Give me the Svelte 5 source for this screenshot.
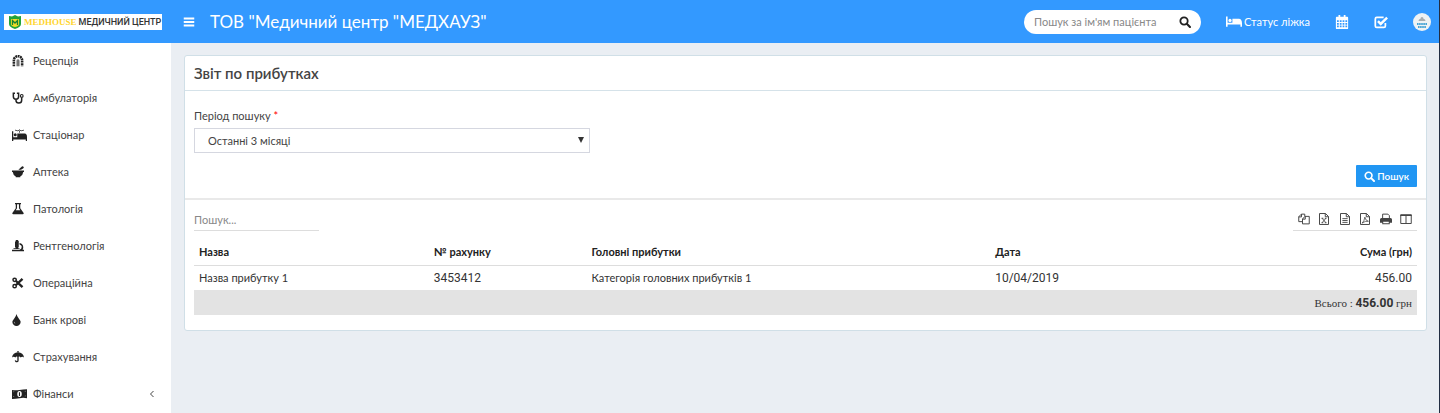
<script lang="ts">
	interface MenuItem {
		label: string;
		icon: string;
		expandable?: boolean;
	}

	interface IncomeRow {
		name: string;
		invoice: string;
		head: string;
		date: string;
		amount: number;
	}

	const menu: MenuItem[] = [
		{ label: 'Рецепція', icon: 'reception' },
		{ label: 'Амбулаторія', icon: 'stethoscope' },
		{ label: 'Стаціонар', icon: 'ward' },
		{ label: 'Аптека', icon: 'mortar' },
		{ label: 'Патологія', icon: 'flask' },
		{ label: 'Рентгенологія', icon: 'microscope' },
		{ label: 'Операційна', icon: 'scissors' },
		{ label: 'Банк крові', icon: 'drop' },
		{ label: 'Страхування', icon: 'umbrella' },
		{ label: 'Фінанси', icon: 'money', expandable: true }
	];

	const exports = [
		{ label: 'Копіювати', icon: 'copy' },
		{ label: 'Excel', icon: 'excel' },
		{ label: 'CSV', icon: 'text' },
		{ label: 'PDF', icon: 'pdf' },
		{ label: 'Друк', icon: 'print' },
		{ label: 'Колонки', icon: 'columns' }
	];

	const rows: IncomeRow[] = [
		{ name: 'Назва прибутку 1', invoice: '3453412', head: 'Категорія головних прибутків 1', date: '10/04/2019', amount: 456 }
	];

	const wideIcons = ['ward', 'money', 'bed'];

	let patient = $state('');
	let period = $state('3m');
	let filter = $state('');

	let visibleRows = $derived(
		rows.filter(r => r.name.toLowerCase().includes(filter.toLowerCase()))
	);
	let total = $derived(visibleRows.reduce((sum, r) => sum + r.amount, 0));
</script>

{#snippet icon(name: string)}
	<svg class="icon" class:wide={wideIcons.includes(name)} viewBox={wideIcons.includes(name) ? '0 0 20 16' : '0 0 16 16'} aria-hidden="true">
		{#if name === 'reception'}
			<path d="M2.500 15V7a5.500 5.500 0 0 1 11 0v8" fill="none" stroke="currentColor" stroke-width="3.400" stroke-dasharray="2.400 .8" />
			<path d="M5.500 15V8a2.500 2.500 0 0 1 5 0v7z" opacity=".4" />
			<path d="M8 6v9" stroke="currentColor" />
		{:else if name === 'stethoscope'}
			<path d="M4 1.500H1.800V6a3.500 3.500 0 0 0 7 0V1.500H6.500M5.300 9.500V11a3.800 3.800 0 0 0 7.600 0V7" fill="none" stroke="currentColor" stroke-width="2" />
			<circle cx="13" cy="5.200" r="1.800" fill="none" stroke="currentColor" stroke-width="1.500" />
		{:else if name === 'ward'}
			<path d="M0 3h1.700v8H20v5h-1.600v-2H1.700v2H0zM7 6h10q3 0 3 5H7z" />
			<circle cx="4.300" cy="7.500" r="2" />
			<path d="M4 1.500l4 1 2-1.500 2 1.500 4-1M10 2v3" fill="none" stroke="currentColor" />
		{:else if name === 'mortar'}
			<path d="M0 6h16v2h-1q-.4 4-4 6v1H5v-1Q1.400 12 1 8H0zM8.500 5l4.700-4.500q1.600-.5 2.300.8t-.8 2L12 5z" />
		{:else if name === 'flask'}
			<path fill-rule="evenodd" d="M4 0h8v1.800h-1V7l4.300 6q1 2-1 2H1.700q-2 0-1-2L5 7V1.800H4zM6.700 1.800V7L5 9.500h6L9.300 7V1.800z" />
		{:else if name === 'microscope'}
			<path d="M5 0h3v1h1v9H8v1H5v-1H4V2h1zM10 4q5 1 5 6 0 2-1 3h2v2H0v-2h10q3-1 3-4 0-2-3-3zM2 11h8v1H2z" />
		{:else if name === 'scissors'}
			<path d="M5 5l9 8.500M5 11l9-8.500" stroke="currentColor" stroke-width="3.200" />
			<circle cx="3.500" cy="3.800" r="2.200" fill="none" stroke="currentColor" stroke-width="2" />
			<circle cx="3.500" cy="12.200" r="2.200" fill="none" stroke="currentColor" stroke-width="2" />
		{:else if name === 'drop'}
			<path fill-rule="evenodd" d="M6 0q.5 2.500 2.800 5.500Q11.500 9 11.500 10.500a5.500 5.500 0 0 1-11 0Q.5 9 3.200 5.500 5.500 2.500 6 0zM3 10q-.8 2 1.500 3.300Q3.700 11.500 3 10z" />
		{:else if name === 'umbrella'}
			<path d="M8 0v2M8 7v5.500q0 1.700-1.700 1.700T4.700 12.500" fill="none" stroke="currentColor" stroke-width="1.800" />
			<path d="M0 8.500Q1 2 8 1.500q7 .5 8 7-2.400-2-4.500 0Q10 6.500 8 8 6 6.500 4.500 8.500 2.400 6.500 0 8.500z" />
		{:else if name === 'money'}
			<path fill-rule="evenodd" d="M0 2.500q5 1 10 0t10-1v12q-5-1-10 0t-10 1zM2 4.800v1q1 0 1-1zm16-1q-1 0-1 1h1zM2 11v1h1q0-1-1-1zm16-1q-1 0-1 1h1zM10 4q-3 0-3 4t3 4 3-4-3-4zm-.8 1.500h1.500v5h-1.500z" />
		{:else if name === 'bed'}
			<path d="M0 1h2v8h18v5h-2v-3H2v3H0zM8 4h8q4 0 4 6H8z" />
			<circle cx="5" cy="6" r="2" />
		{:else if name === 'bars'}
			<path d="M1 2h14v2.600H1zM1 6.700h14v2.600H1zM1 11.400h14V14H1z" />
		{:else if name === 'search'}
			<circle cx="6.700" cy="6.700" r="4.900" fill="none" stroke="currentColor" stroke-width="2.400" />
			<path d="M10.400 10.400l4.200 4.200" stroke="currentColor" stroke-width="2.800" stroke-linecap="round" />
		{:else if name === 'calendar'}
			<path fill-rule="evenodd" d="M1 3q0-1 1-1h2V0h2v2h4V0h2v2h2q1 0 1 1v12q0 1-1 1H2q-1 0-1-1zM2.300 6v2h2V6zm3.200 0v2h2V6zm3.200 0v2h2V6zm3.200 0v2h2V6zM2.300 9v2h2V9zm3.200 0v2h2V9zm3.200 0v2h2V9zm3.200 0v2h2V9zM2.300 12v2h2v-2zm3.200 0v2h2v-2zm3.200 0v2h2v-2zm3.200 0v2h2v-2z" />
		{:else if name === 'check'}
			<path d="M13 9v3.500q0 1.700-1.700 1.700H3.200q-1.700 0-1.700-1.700v-8q0-1.700 1.700-1.700H11" fill="none" stroke="currentColor" stroke-width="2" />
			<path d="M4.500 7l3.200 3.200L15 3" fill="none" stroke="currentColor" stroke-width="2.800" />
		{:else if name === 'copy'}
			<path d="M6 11.500H1V5l3.500-3.500H9v3M1 5.200h3.700V1.500M6 8l3.300-3.500H15v10H6zM6 8.200h3.700V4.500" fill="none" stroke="currentColor" stroke-width="1.300" />
		{:else if name === 'print'}
			<path d="M3.500 7V1.500h7L12.500 3.500V7" fill="none" stroke="currentColor" stroke-width="1.300" />
			<path fill-rule="evenodd" d="M2 6.500h12q2 0 2 2V13h-3v2H3v-2H0V8.500q0-2 2-2zm2.300 5v2.200h7.400v-2.200z" />
		{:else if name === 'columns'}
			<path d="M1 2.500h14v11.500H1zM8 3v11" fill="none" stroke="currentColor" stroke-width="1.300" />
			<path d="M.5 2h15v2H.5z" />
		{:else}
			<path d="M2 .7h8l4 4v10.600H2zM9.700.7V5H14" fill="none" stroke="currentColor" stroke-width="1.300" />
			{#if name === 'excel'}
				<path d="M5.500 7l5 6M10.500 7l-5 6M4.700 7h2.500M9 7h2.300M4.700 13H7M9 13h2.300" fill="none" stroke="currentColor" stroke-width="1.200" />
			{:else if name === 'text'}
				<path d="M4.500 7.500h7M4.500 10h7M4.500 12.500h7" stroke="currentColor" stroke-width="1.200" />
			{:else}
				<path d="M4 13.500q3-2 3.800-8 1 5 4.700 5.500-4-.7-8.500 2.500z" fill="none" stroke="currentColor" />
			{/if}
		{/if}
	</svg>
{/snippet}

<div class="shell">
	<header class="topbar">
		<a class="brand" href="#home">
			<svg class="shield" viewBox="0 0 14 14" aria-hidden="true">
				<path d="M1 1l3 .6L7 0l3 1.600L13 1v8q0 3-6 5-6-2-6-5z" fill="#23a339" />
				<path d="M3 4h8v6q-2 2-4 2t-4-2z" fill="#f5dc27" />
				<path d="M4.500 10V5.500L7 8l2.500-2.500V10" fill="none" stroke="#168334" stroke-width="1.300" />
			</svg>
			<span class="brand-name">MEDHOUSE</span>
			<span class="brand-kind">МЕДИЧНИЙ ЦЕНТР</span>
		</a>
		<button class="toggle" aria-label="Меню">{@render icon('bars')}</button>
		<span class="title">ТОВ "Медичний центр "МЕДХАУЗ"</span>
		<form class="patient-search" role="search" onsubmit={e => e.preventDefault()}>
			<input type="text" placeholder="Пошук за ім'ям пацієнта" aria-label="Пошук за ім'ям пацієнта" bind:value={patient} />
			<button aria-label="Знайти">{@render icon('search')}</button>
		</form>
		<nav class="tools">
			<a class="bed-status" href="#beds">{@render icon('bed')}Статус ліжка</a>
			<a href="#calendar" aria-label="Календар">{@render icon('calendar')}</a>
			<a href="#tasks" aria-label="Завдання">{@render icon('check')}</a>
			<a class="avatar" href="#profile" aria-label="Профіль">
				<svg viewBox="0 0 18 18" aria-hidden="true">
					<circle cx="9" cy="9" r="9" fill="#eef2f4" />
					<path d="M5.500 8q0-2 2-2.200Q7.500 4 9 4t1.500 1.800q2 .2 2 2.200z" fill="#a8adb0" />
					<path d="M4 11h10M5 14h8" stroke="#45a3d5" stroke-width="1.800" stroke-dasharray="1.600 .5" />
				</svg>
			</a>
		</nav>
	</header>

	<div class="layout">
		<aside class="sidebar">
			<ul>
				{#each menu as item}
					<li>
						<a href="#{item.icon}">
							<span class="menu-icon">{@render icon(item.icon)}</span>
							{item.label}
							{#if item.expandable}
								<svg class="chevron" viewBox="0 0 6 8" aria-hidden="true"><path d="M4.500 1l-3 3 3 3" fill="none" stroke="currentColor" /></svg>
							{/if}
						</a>
					</li>
				{/each}
			</ul>
		</aside>

		<main>
			<section class="card">
				<h1>Звіт по прибутках</h1>
				<form class="criteria" onsubmit={e => e.preventDefault()}>
					<label for="period">Період пошуку <span class="required">*</span></label>
					<div class="select-wrap">
						<select id="period" bind:value={period}>
							<option value="3m">Останні 3 місяці</option>
							<option value="6m">Останні 6 місяців</option>
							<option value="12m">Останні 12 місяців</option>
						</select>
					</div>
					<button class="submit">{@render icon('search')}Пошук</button>
				</form>

				<div class="report">
					<div class="table-tools">
						<input type="search" placeholder="Пошук..." aria-label="Пошук у таблиці" bind:value={filter} />
						<div class="exports">
							{#each exports as action}
								<button aria-label={action.label}>{@render icon(action.icon)}</button>
							{/each}
						</div>
					</div>
					<table>
						<colgroup>
							<col class="col-name" />
							<col class="col-invoice" />
							<col class="col-head" />
							<col class="col-date" />
							<col />
						</colgroup>
						<thead>
							<tr>
								<th>Назва</th>
								<th>№ рахунку</th>
								<th>Головні прибутки</th>
								<th>Дата</th>
								<th class="numeric">Сума (грн)</th>
							</tr>
						</thead>
						<tbody>
							{#each visibleRows as row}
								<tr>
									<td>{row.name}</td>
									<td class="figure">{row.invoice}</td>
									<td>{row.head}</td>
									<td class="figure">{row.date}</td>
									<td class="figure numeric">{row.amount.toFixed(2)}</td>
								</tr>
							{/each}
						</tbody>
						<tfoot>
							<tr>
								<td class="numeric" colspan="5">Всього : <b>{total.toFixed(2)}</b> грн</td>
							</tr>
						</tfoot>
					</table>
				</div>
			</section>
		</main>
	</div>
</div>

<style>
	:global(body) {
		background: #eaeef3;
		color: #444;
		font: 11px/16px Lato, sans-serif;
	}

	* {
		box-sizing: border-box;
	}

	a {
		color: inherit;
		text-decoration: none;
	}

	button,
	input,
	select {
		font: inherit;
		color: inherit;
		border: 0;
		padding: 0;
		background: none;
	}

	button {
		cursor: pointer;
	}

	.icon {
		display: block;
		width: 12px;
		height: 12px;
		fill: currentColor;
		flex: none;
	}

	.icon.wide {
		width: 15px;
	}

	.shell {
		border-right: 1px solid #222d42;
	}

	.topbar {
		display: flex;
		align-items: center;
		height: 43px;
		padding: 0 8px 0 4px;
		background: #39f;
		color: #fff;
	}

	.brand {
		display: flex;
		align-items: center;
		width: 158px;
		height: 16px;
		padding-left: 4px;
		gap: 2px;
		background: #fff;
		white-space: nowrap;
	}

	.shield {
		flex: none;
		width: 14px;
		height: 14px;
	}

	.brand-name {
		color: #ffd52e;
		font: bold 9px/16px "Liberation Serif", serif;
	}

	.brand-kind {
		color: #333;
		font: 500 9px/16px Roboto, sans-serif;
	}

	.toggle {
		margin-left: 21px;
	}

	.title {
		margin-left: 15px;
		font-size: 17px;
		line-height: 24px;
	}

	.patient-search {
		display: flex;
		align-items: center;
		width: 177px;
		height: 24px;
		margin-left: auto;
		padding: 0 10px;
		border-radius: 12px;
		background: #fff;
		color: #222;
	}

	.patient-search input {
		flex: 1;
		min-width: 0;
		outline: 0;
	}

	input::placeholder {
		color: #888;
		opacity: 1;
	}

	.tools {
		display: flex;
		align-items: center;
		gap: 25px;
		margin-left: 25px;
	}

	.tools .icon {
		height: 14px;
		width: 14px;
	}

	.bed-status {
		display: flex;
		align-items: center;
		gap: 2px;
	}

	.tools .icon.wide {
		width: 16px;
	}

	.avatar svg {
		display: block;
		width: 18px;
		height: 18px;
	}

	.layout {
		display: flex;
		min-height: calc(100vh - 43px);
	}

	.sidebar {
		width: 171px;
		flex: none;
		background: #fff;
	}

	.sidebar ul {
		margin: 0;
		padding: 0;
		list-style: none;
	}

	.sidebar a {
		display: flex;
		align-items: center;
		height: 37px;
		padding: 0 16px 1px 12px;
	}

	.menu-icon {
		width: 21px;
		color: #222;
	}

	.chevron {
		width: 6px;
		height: 8px;
		margin-left: auto;
	}

	main {
		flex: 1;
		min-width: 0;
		padding: 12px 12px 12px 13px;
	}

	.card {
		border: 1px solid #d0dfe7;
		border-radius: 3px;
		background: #fff;
	}

	h1 {
		margin: 0;
		padding: 7px 9px;
		border-bottom: 1px solid #d5e2e9;
		font-size: 15px;
		font-weight: 600;
		line-height: 20px;
	}

	.criteria {
		display: flex;
		flex-direction: column;
		align-items: flex-start;
		padding: 17px 9px 11px;
		border-bottom: 2px solid #e9e9e9;
	}

	.required {
		color: #f00;
	}

	.select-wrap {
		position: relative;
		width: calc((100% - 34px) / 3);
		min-width: 200px;
		margin-top: 4px;
	}

	.select-wrap::after {
		content: "";
		position: absolute;
		top: 9px;
		right: 6px;
		border: 3px solid transparent;
		border-top: 6px solid #333;
		border-bottom: 0;
		pointer-events: none;
	}

	select {
		display: block;
		width: 100%;
		height: 25px;
		padding: 0 13px;
		border: 1px solid #d5d7e0;
		appearance: none;
	}

	.submit {
		display: flex;
		align-items: center;
		align-self: flex-end;
		gap: 2px;
		height: 22px;
		margin-top: 12px;
		padding: 0 8px;
		border-radius: 1px;
		background: #2196f3;
		color: #fff;
		font-size: 10px;
		font-weight: 600;
	}

	.submit .icon {
		width: 11px;
		height: 11px;
	}

	.report {
		padding: 8px 9px 15px;
	}

	.table-tools {
		display: flex;
		justify-content: space-between;
	}

	.table-tools input {
		width: 125px;
		height: 23px;
		border-bottom: 1px solid #ddd;
		outline: 0;
	}

	.exports {
		display: flex;
		justify-content: space-between;
		width: 124px;
		height: 23px;
		padding: 0 5px;
		border-bottom: 1px solid #ddd;
	}

	table {
		width: 100%;
		margin-top: 9px;
		border-collapse: collapse;
		table-layout: fixed;
		color: #333;
	}

	.col-name {
		width: 19.2%;
	}

	.col-invoice {
		width: 12.9%;
	}

	.col-head {
		width: 33%;
	}

	.col-date {
		width: 18%;
	}

	th,
	td {
		height: 25px;
		padding: 0 5px;
		text-align: left;
	}

	th {
		border-bottom: 1px solid #ddd;
		color: #222;
	}

	.figure {
		font-family: Roboto, sans-serif;
		font-size: 12px;
	}

	tfoot td {
		background: #e3e3e3;
		font-family: "Liberation Serif", serif;
	}

	tfoot b {
		font-family: Roboto, sans-serif;
		font-size: 12px;
	}

	.numeric {
		text-align: right;
	}
</style>
